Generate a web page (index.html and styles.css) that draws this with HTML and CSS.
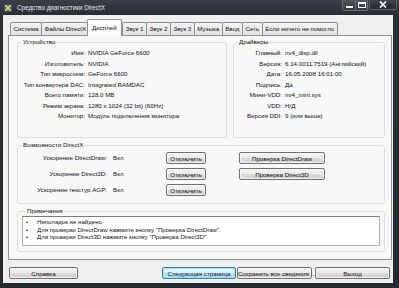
FILE: index.html
```html
<!DOCTYPE html>
<html lang="ru">
<head>
<meta charset="utf-8">
<title>Средство диагностики DirectX</title>
<link rel="stylesheet" href="styles.css">
</head>
<body>
<div class="win">
  <div class="titlebar">
    <svg class="appicon" width="10" height="10" viewBox="0 0 10 10">
      <circle cx="5" cy="5" r="4.6" fill="#1d3f9e"/>
      <circle cx="5" cy="5" r="3.6" fill="#2f63d6"/>
      <path d="M2.6 2.6 L7.4 7.4 M7.4 2.6 L2.6 7.4" stroke="#ffd400" stroke-width="1.6" stroke-linecap="round"/>
    </svg>
    <span class="title">Средство диагностики DirectX</span>
    <div class="caption-btns">
      <div class="capgroup">
        <span class="capbtn"><svg width="7" height="6" viewBox="0 0 7 6"><rect x="0" y="4" width="7" height="2" fill="#fff"/></svg></span>
        <span class="capbtn max"><svg width="8" height="6" viewBox="0 0 8 6"><rect x="0.5" y="0.5" width="7" height="5" fill="none" stroke="#fff"/><rect x="0" y="0" width="8" height="2" fill="#fff"/></svg></span>
      </div>
      <span class="capbtn close"><svg width="8" height="7" viewBox="0 0 8 7"><path d="M1 0.5 L7 6.5 M7 0.5 L1 6.5" stroke="#fff" stroke-width="1.7"/></svg></span>
    </div>
  </div>
  <div class="client">
    <div class="tabs">
      <span class="tab">Система</span>
      <span class="tab">Файлы DirectX</span>
      <span class="tab active">Дисплей</span>
      <span class="tab">Звук 1</span>
      <span class="tab">Звук 2</span>
      <span class="tab">Звук 3</span>
      <span class="tab">Музыка</span>
      <span class="tab">Ввод</span>
      <span class="tab">Сеть</span>
      <span class="tab">Если ничего не помогло</span>
    </div>
    <div class="panel">
      <div class="toprow">
        <fieldset class="group device">
          <legend>Устройство</legend>
          <div class="kv kv-device">
            <span class="k">Имя:</span><span class="v">NVIDIA GeForce 6600</span>
            <span class="k">Изготовитель:</span><span class="v">NVIDIA</span>
            <span class="k">Тип микросхем:</span><span class="v">GeForce 6600</span>
            <span class="k">Тип конвертера DAC:</span><span class="v">Integrated RAMDAC</span>
            <span class="k">Всего памяти:</span><span class="v">128.0 MB</span>
            <span class="k">Режим экрана:</span><span class="v">1280 x 1024 (32 bit) (60Hz)</span>
            <span class="k">Монитор:</span><span class="v">Модуль подключения монитора</span>
          </div>
        </fieldset>
        <fieldset class="group drivers">
          <legend>Драйверы</legend>
          <div class="kv kv-drivers">
            <span class="k">Главный:</span><span class="v">nv4_disp.dll</span>
            <span class="k">Версия:</span><span class="v">6.14.0011.7519 (Английский)</span>
            <span class="k">Дата:</span><span class="v">16.05.2008 16:01:00</span>
            <span class="k">Подпись:</span><span class="v">Да</span>
            <span class="k">Мини-VDD:</span><span class="v">nv4_mini.sys</span>
            <span class="k">VDD:</span><span class="v">Н/Д</span>
            <span class="k">Версия DDI:</span><span class="v">9 (или выше)</span>
          </div>
        </fieldset>
      </div>
      <fieldset class="group dx">
        <legend>Возможности DirectX</legend>
        <div class="dxgrid">
          <span class="k">Ускорение DirectDraw:</span><span class="v">Вкл</span><button class="btn off">Отключить</button><button class="btn test">Проверка DirectDraw</button>
          <span class="k">Ускорение Direct3D:</span><span class="v">Вкл</span><button class="btn off">Отключить</button><button class="btn test">Проверка Direct3D</button>
          <span class="k">Ускорение текстур AGP:</span><span class="v">Вкл</span><button class="btn off">Отключить</button><span></span>
        </div>
      </fieldset>
      <fieldset class="group notes">
        <legend>Примечания</legend>
        <ul class="notebox">
          <li>Неполадок не найдено.</li>
          <li>Для проверки DirectDraw нажмите кнопку "Проверка DirectDraw".</li>
          <li>Для проверки Direct3D нажмите кнопку "Проверка Direct3D".</li>
        </ul>
      </fieldset>
    </div>
    <div class="footer">
      <button class="btn fbtn help">Справка</button>
      <button class="btn fbtn next focus">Следующая страница</button>
      <button class="btn fbtn save">Сохранить все сведения...</button>
      <button class="btn fbtn exit">Выход</button>
    </div>
  </div>
</div>
</body>
</html>
```
FILE: styles.css
```css
* { box-sizing: border-box; }
html, body { margin: 0; padding: 0; }
body {
  width: 399px;
  height: 288px;
  overflow: hidden;
  font-family: "Liberation Sans", Arial, sans-serif;
  font-size: 6.2px;
  color: #111;
  background: #23272c;
}
.win {
  width: 399px;
  height: 288px;
  display: flex;
  flex-direction: column;
  background: linear-gradient(#3a3f46 0px, #2a2e33 14px, #25292e 100%);
}
.titlebar {
  height: 15px;
  display: flex;
  align-items: flex-start;
  padding: 2px 2px 0 3px;
}
.appicon { flex: none; margin-top: 1px; }
.title {
  color: #e8eaee;
  margin-left: 4px;
  line-height: 12px;
  font-size: 6.3px;
}
.caption-btns {
  margin-left: auto;
  display: flex;
  margin-top: -2px;
}
.capgroup {
  display: flex;
  border: 1px solid #6a6f77;
  border-top: none;
  border-radius: 0 0 2px 2px;
  background: linear-gradient(#50555c, #33373c);
}
.capbtn {
  width: 12px;
  height: 10px;
  display: flex;
  align-items: center;
  justify-content: center;
}
.capbtn.max { border-left: 1px solid #6a6f77; }
.capbtn.close {
  width: 28px;
  margin-left: 1px;
  border: 1px solid #5c6168;
  border-top: none;
  border-radius: 0 0 2px 2px;
  background: linear-gradient(#41454b, #24272b);
}
.client {
  flex: 1;
  margin: 0 6px 5px 3px;
  background: #f0f0f0;
  padding: 4px 1px 0 5px;
  display: flex;
  flex-direction: column;
}
.tabs {
  display: flex;
  align-items: flex-end;
  height: 16px;
  padding-left: 2px;
  position: relative;
  z-index: 1;
}
.tab {
  height: 13px;
  line-height: 12px;
  padding: 0 2.5px;
  border: 1px solid #8e9099;
  border-bottom: none;
  margin-right: -1px;
  background: linear-gradient(#f4f4f4, #e2e2e2);
  border-radius: 2px 2px 0 0;
  white-space: nowrap;
}
.tab.active {
  height: 17px;
  line-height: 15px;
  margin: 0 -1px -1px -2px;
  padding: 0 4.5px;
  background: #fbfbfb;
  position: relative;
  z-index: 2;
}
.tab.active + .tab { margin-left: 1px; }
.panel {
  width: 384px;
  height: 225px;
  border: 1px solid #8e9099;
  background: #f8f8f8;
  padding: 0 6px 0 8px;
}
.group {
  margin: 0;
  border: 1px solid #d5dfe5;
  border-radius: 3px;
  padding: 0;
  min-width: 0;
}
.group legend {
  margin-left: 4px;
  padding: 0 1px;
  line-height: 8px;
  font-size: 6.2px;
}
.toprow {
  display: flex;
  gap: 6px;
  margin-top: 2px;
}
.device { width: 210px; height: 100px; }
.drivers { width: 152px; height: 100px; }
.kv {
  display: grid;
  grid-auto-rows: 10.5px;
  line-height: 10.5px;
  column-gap: 3px;
  margin-top: 2px;
  white-space: nowrap;
}
.kv-device { grid-template-columns: 67px 1fr; }
.kv-drivers { grid-template-columns: 48px 1fr; }
.k { text-align: right; }
.dx {
  margin-top: 3px;
  height: 63px;
}
.dxgrid {
  display: grid;
  grid-template-columns: 89px 59px 40px 119px;
  column-gap: 0;
  row-gap: 4px;
  grid-auto-rows: 12px;
  line-height: 12px;
  margin-top: 3px;
  white-space: nowrap;
}
.dxgrid .v { padding-left: 6px; }
.btn {
  font-family: inherit;
  font-size: 6.2px;
  color: #111;
  height: 12px;
  padding: 0;
  margin: 0;
  border: 1px solid #707070;
  border-radius: 2px;
  background: linear-gradient(#f3f3f3 0%, #ebebeb 50%, #dddddd 51%, #cfcfcf 100%);
  box-shadow: inset 0 0 0 1px rgba(255,255,255,0.7);
  white-space: nowrap;
}
.dxgrid .test { margin-left: 33px; width: 86px; }
.dxgrid .off { width: 40px; }
.notes {
  margin-top: 3px;
  height: 45px;
  padding: 0 4px 4px 4px;
}
.notebox {
  list-style: none;
  margin: 1px 0 0 0;
  padding: 1px 0 0 3px;
  height: 30px;
  background: #fff;
  border: 1px solid #abadb3;
  border-top-color: #7a7b7c;
  line-height: 7.6px;
  font-size: 6.1px;
}
.notebox li {
  position: relative;
  padding-left: 11px;
  white-space: nowrap;
}
.notebox li::before {
  content: "•";
  position: absolute;
  left: 0;
  top: 0;
}
.footer {
  display: flex;
  margin-top: 7px;
  padding-left: 1px;
}
.fbtn { height: 12px; }
.help { width: 69px; }
.next { width: 74px; margin-left: auto; }
.save { width: 75px; margin-left: 1px; }
.exit { width: 75px; margin-left: 3px; margin-right: 2px; }
.focus {
  border-color: #3c7fb1;
  box-shadow: inset 0 0 0 1px #a8dcf5;
  background: linear-gradient(#eaf6fd 0%, #d9f0fc 50%, #bee6fd 51%, #a7d9f5 100%);
}
```
